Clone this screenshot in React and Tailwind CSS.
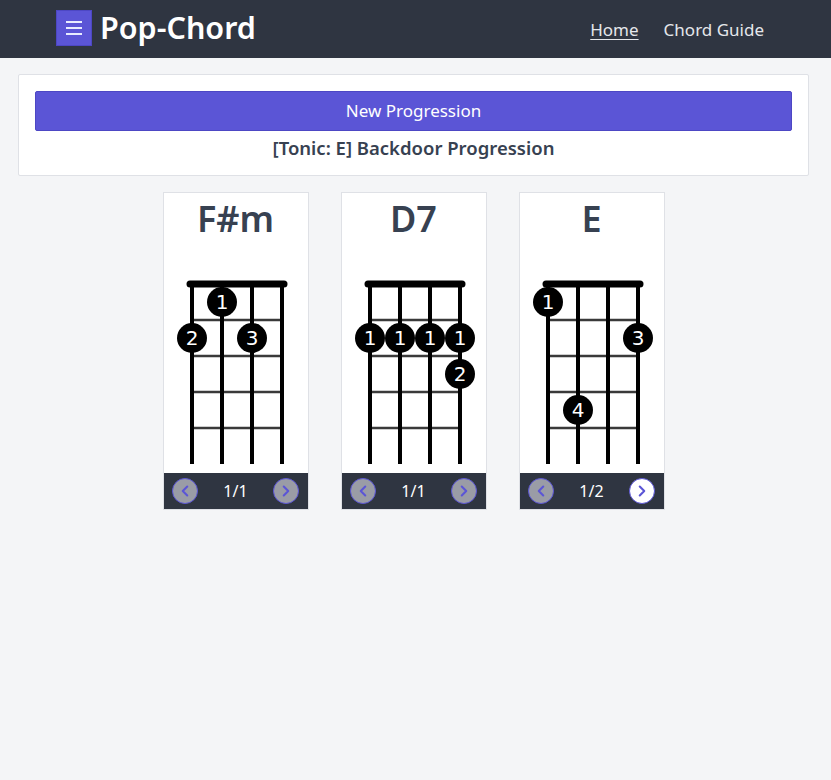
import React from "react";
import { ChevronLeft, ChevronRight } from "lucide-react";

const FONT = { fontFamily: '"Noto Sans", "Open Sans", sans-serif' };

const STRINGS = [28, 58, 88, 118];
const FRET_CENTER = [null, 32, 68, 104, 140];

function Diagram({ dots }) {
  return (
    <svg width="146" height="200" viewBox="0 0 146 200" className="block">
      {[50, 86, 122, 158].map((y) => (
        <line key={y} x1="28" x2="118" y1={y} y2={y} stroke="#3a3a3a" strokeWidth="2.5" />
      ))}
      {STRINGS.map((x) => (
        <line key={x} x1={x} x2={x} y1="14" y2="194" stroke="#000" strokeWidth="4" />
      ))}
      <line x1="26" x2="120" y1="14" y2="14" stroke="#000" strokeWidth="7" strokeLinecap="round" />
      {dots.map((d, i) => (
        <g key={i}>
          <circle cx={STRINGS[d.s]} cy={FRET_CENTER[d.f]} r="15" fill="#000" />
          <text
            x={STRINGS[d.s]}
            y={FRET_CENTER[d.f] + 7}
            textAnchor="middle"
            fill="#ffffff"
            fontSize="20"
            fontFamily='"DejaVu Sans", sans-serif'
            fontWeight="500"
          >
            {d.n}
          </text>
        </g>
      ))}
    </svg>
  );
}

function NavBtn({ dir, enabled }) {
  const Icon = dir === "left" ? ChevronLeft : ChevronRight;
  return (
    <div
      className={`w-[26px] h-[26px] rounded-full border-[1.5px] border-[#5b55d6] flex items-center justify-center ${
        enabled ? "bg-white" : "bg-[#9a9ca6]"
      }`}
    >
      <Icon size={18} strokeWidth={2.75} color="#5b55d6" />
    </div>
  );
}

function Card({ name, dots, page, nextEnabled }) {
  return (
    <div className="w-[146px] bg-white border border-[#dfe1e6] flex flex-col">
      <div className="pt-[4px] text-center text-[36px] leading-[44px] font-semibold text-[#374151]">{name}</div>
      <div className="mt-[29px]">
        <Diagram dots={dots} />
      </div>
      <div className="mt-[3px] h-[36px] bg-[#2f3541] flex items-center justify-between px-[8px]">
        <NavBtn dir="left" enabled={false} />
        <span className="text-white text-[16px]">{page}</span>
        <NavBtn dir="right" enabled={nextEnabled} />
      </div>
    </div>
  );
}

export default function App() {
  const chords = [
    {
      name: "F#m",
      page: "1/1",
      next: false,
      dots: [
        { s: 1, f: 1, n: "1" },
        { s: 0, f: 2, n: "2" },
        { s: 2, f: 2, n: "3" },
      ],
    },
    {
      name: "D7",
      page: "1/1",
      next: false,
      dots: [
        { s: 0, f: 2, n: "1" },
        { s: 1, f: 2, n: "1" },
        { s: 2, f: 2, n: "1" },
        { s: 3, f: 2, n: "1" },
        { s: 3, f: 3, n: "2" },
      ],
    },
    {
      name: "E",
      page: "1/2",
      next: true,
      dots: [
        { s: 0, f: 1, n: "1" },
        { s: 3, f: 2, n: "3" },
        { s: 1, f: 4, n: "4" },
      ],
    },
  ];
  return (
    <div className="min-h-[780px] bg-[#f4f5f7]" style={FONT}>
      <nav className="h-[58px] bg-[#2f3541] flex items-center pl-[56px] pr-[67px]">
        <div className="w-[36px] h-[36px] bg-[#5b55d6] border border-[#4d47c4] flex flex-col items-center justify-center gap-[4px] -mt-[2px]">
          <span className="block w-[16px] h-[2px] bg-[#e8ecff]" />
          <span className="block w-[16px] h-[2px] bg-[#e8ecff]" />
          <span className="block w-[16px] h-[2px] bg-[#e8ecff]" />
        </div>
        <span className="ml-[8px] text-white text-[30.5px] font-semibold leading-none -mt-[4px]">Pop-Chord</span>
        <div className="ml-auto flex items-center gap-[25px] text-[17px] text-[#e5e7eb] mt-[2px]">
          <a className="underline underline-offset-[3px]">Home</a>
          <a>Chord Guide</a>
        </div>
      </nav>
      <main className="pl-[18px] pr-[22px] pt-[16px]">
        <div className="bg-white border border-[#dfe1e6] rounded-[2px] px-[16px] pt-[16px] pb-[13px]">
          <button className="w-full h-[40px] bg-[#5b55d6] border border-[#4d47c4] rounded-[2px] text-white text-[17px]">
            New Progression
          </button>
          <div className="mt-[3px] text-center text-[18.5px] font-semibold text-[#374151] leading-[28px]">
            [Tonic: E] Backdoor Progression
          </div>
        </div>
        <div className="mt-[16px] flex justify-center gap-[32px]">
          {chords.map((c) => (
            <Card key={c.name} name={c.name} dots={c.dots} page={c.page} nextEnabled={c.next} />
          ))}
        </div>
      </main>
    </div>
  );
}
